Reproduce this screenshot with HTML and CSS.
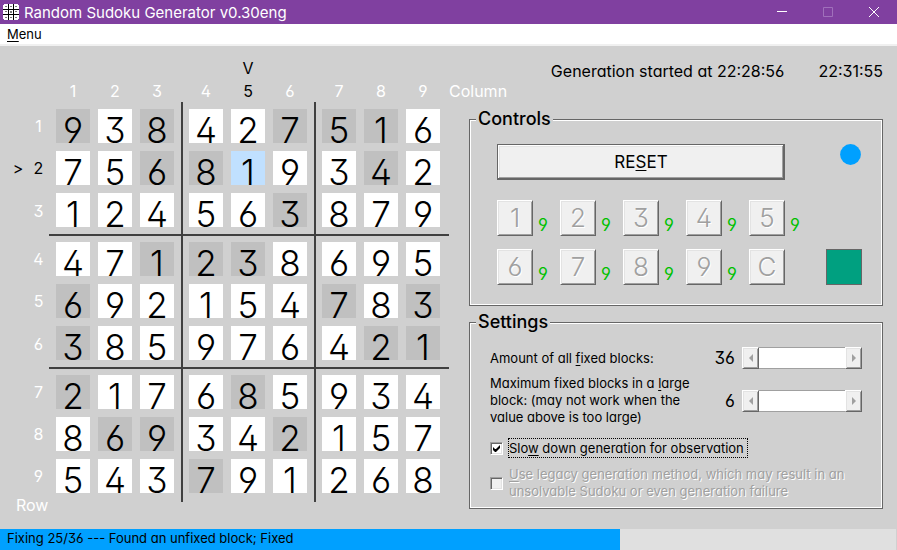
FILE: index.html
```html
<!DOCTYPE html>
<html lang="en">
<head>
<meta charset="utf-8">
<title>Random Sudoku Generator v0.30eng</title>
<link rel="stylesheet" href="styles.css">
</head>
<body>
<header class="titlebar">
  <svg class="app-icon" width="16" height="16" viewBox="0 0 16 16" shape-rendering="crispEdges" aria-hidden="true">
    <path fill="#fff" d="M1 0h14v1h1v14h-1v1H1v-1H0V1h1z"/>
    <path fill="#000" d="M5 0h1v16H5zM10 0h1v16h-1zM0 5h16v1H0zM0 10h16v1H0z"/>
    <path fill="#777" d="M2 2h2v1H2zM7 2h2v1H7zM12 2h2v1h-2zM2 7h2v1H2zM7 7h2v2H7zM12 7h2v1h-2zM2 13h2v1H2zM7 13h2v1H7zM12 13h2v1h-2z"/>
  </svg>
  <h1>Random Sudoku Generator v0.30eng</h1>
  <div class="window-buttons">
    <button type="button" aria-label="Minimize"><svg width="10" height="10" viewBox="0 0 10 10"><path d="M0 4.5h10"/></svg></button>
    <button type="button" aria-label="Maximize" disabled><svg width="10" height="10" viewBox="0 0 10 10"><path d="M.5.5h9v9h-9z"/></svg></button>
    <button type="button" aria-label="Close"><svg width="10" height="10" viewBox="0 0 10 10"><path d="M0 0l10 10M10 0L0 10"/></svg></button>
  </div>
</header>
<nav class="menubar"><button type="button"><u>M</u>enu</button></nav>

<main>
  <table class="board">
    <thead>
      <tr class="pointer"><td></td><td></td><th></th><th></th><th></th><th></th><th class="on">V</th><th></th><th></th><th></th><th></th></tr>
      <tr class="labels"><td></td><td></td><th>1</th><th>2</th><th>3</th><th>4</th><th class="on">5</th><th>6</th><th>7</th><th>8</th><th>9</th><td class="axis">Column</td></tr>
    </thead>
    <tbody>
      <tr><th></th><th>1</th><td><span class="fixed">9</span></td><td><span>3</span></td><td><span class="fixed">8</span></td><td><span>4</span></td><td><span>2</span></td><td><span class="fixed">7</span></td><td><span class="fixed">5</span></td><td><span class="fixed">1</span></td><td><span>6</span></td></tr>
      <tr><th class="on">&gt;</th><th class="on">2</th><td><span>7</span></td><td><span>5</span></td><td><span class="fixed">6</span></td><td><span class="fixed">8</span></td><td><span class="current">1</span></td><td><span>9</span></td><td><span>3</span></td><td><span class="fixed">4</span></td><td><span>2</span></td></tr>
      <tr><th></th><th>3</th><td><span>1</span></td><td><span>2</span></td><td><span>4</span></td><td><span>5</span></td><td><span>6</span></td><td><span class="fixed">3</span></td><td><span>8</span></td><td><span>7</span></td><td><span>9</span></td></tr>
      <tr><th></th><th>4</th><td><span>4</span></td><td><span>7</span></td><td><span class="fixed">1</span></td><td><span class="fixed">2</span></td><td><span class="fixed">3</span></td><td><span>8</span></td><td><span>6</span></td><td><span>9</span></td><td><span>5</span></td></tr>
      <tr><th></th><th>5</th><td><span class="fixed">6</span></td><td><span>9</span></td><td><span>2</span></td><td><span>1</span></td><td><span>5</span></td><td><span>4</span></td><td><span class="fixed">7</span></td><td><span>8</span></td><td><span class="fixed">3</span></td></tr>
      <tr><th></th><th>6</th><td><span class="fixed">3</span></td><td><span>8</span></td><td><span>5</span></td><td><span>9</span></td><td><span>7</span></td><td><span>6</span></td><td><span>4</span></td><td><span class="fixed">2</span></td><td><span class="fixed">1</span></td></tr>
      <tr><th></th><th>7</th><td><span class="fixed">2</span></td><td><span>1</span></td><td><span>7</span></td><td><span>6</span></td><td><span class="fixed">8</span></td><td><span>5</span></td><td><span>9</span></td><td><span>3</span></td><td><span>4</span></td></tr>
      <tr><th></th><th>8</th><td><span>8</span></td><td><span class="fixed">6</span></td><td><span class="fixed">9</span></td><td><span>3</span></td><td><span>4</span></td><td><span class="fixed">2</span></td><td><span>1</span></td><td><span>5</span></td><td><span>7</span></td></tr>
      <tr><th></th><th>9</th><td><span>5</span></td><td><span>4</span></td><td><span>3</span></td><td><span class="fixed">7</span></td><td><span>9</span></td><td><span>1</span></td><td><span>2</span></td><td><span>6</span></td><td><span>8</span></td></tr>
    </tbody>
  </table>
  <div class="row-axis">Row</div>

  <div class="side">
    <div class="times"><span>Generation started at 22:28:56</span><time>22:31:55</time></div>

    <fieldset class="controls">
      <legend>Controls</legend>
      <div class="top-line">
        <button type="button" class="bevel reset">RE<u>S</u>ET</button>
        <svg class="lamp" width="22" height="22" viewBox="0 0 22 22" aria-hidden="true"><circle cx="10.5" cy="10.5" r="10.4" fill="#00a0ff"/></svg>
      </div>
      <div class="keys">
        <div class="pad">
          <div class="key"><button type="button" class="bevel" disabled>1</button><span>9</span></div>
          <div class="key"><button type="button" class="bevel" disabled>2</button><span>9</span></div>
          <div class="key"><button type="button" class="bevel" disabled>3</button><span>9</span></div>
          <div class="key"><button type="button" class="bevel" disabled>4</button><span>9</span></div>
          <div class="key"><button type="button" class="bevel" disabled>5</button><span>9</span></div>
          <div class="key"><button type="button" class="bevel" disabled>6</button><span>9</span></div>
          <div class="key"><button type="button" class="bevel" disabled>7</button><span>9</span></div>
          <div class="key"><button type="button" class="bevel" disabled>8</button><span>9</span></div>
          <div class="key"><button type="button" class="bevel" disabled>9</button><span>9</span></div>
          <div class="key"><button type="button" class="bevel" disabled>C</button></div>
        </div>
        <div class="swatch"></div>
      </div>
    </fieldset>

    <fieldset class="settings">
      <legend>Settings</legend>
      <div class="setting">
        <label for="total">Amount of all <u>f</u>ixed blocks:</label>
        <output for="total">36</output>
        <div class="scroll">
          <button type="button" class="bevel" aria-label="Decrease" disabled><svg width="4" height="8" viewBox="0 0 4 8"><path d="M4 0v8L0 4z"/></svg></button>
          <input type="range" id="total" min="0" max="81" value="36" disabled>
          <button type="button" class="bevel" aria-label="Increase" disabled><svg width="4" height="8" viewBox="0 0 4 8"><path d="M0 0v8l4-4z"/></svg></button>
        </div>
      </div>
      <div class="setting">
        <label for="block">Maximum fixed blocks in a <u>l</u>arge block: (may not work when the value above is too large)</label>
        <output for="block">6</output>
        <div class="scroll">
          <button type="button" class="bevel" aria-label="Decrease" disabled><svg width="4" height="8" viewBox="0 0 4 8"><path d="M4 0v8L0 4z"/></svg></button>
          <input type="range" id="block" min="0" max="9" value="6" disabled>
          <button type="button" class="bevel" aria-label="Increase" disabled><svg width="4" height="8" viewBox="0 0 4 8"><path d="M0 0v8l4-4z"/></svg></button>
        </div>
      </div>
      <div class="check">
        <input type="checkbox" id="slow" checked>
        <label for="slow" class="focused">Slo<u>w</u> down generation for observation</label>
      </div>
      <div class="check off">
        <input type="checkbox" id="legacy" disabled>
        <label for="legacy"><u>U</u>se legacy generation method, which may result in an unsolvable Sudoku or even generation failure</label>
      </div>
    </fieldset>
  </div>
</main>

<footer class="status" role="progressbar" aria-valuemin="0" aria-valuemax="36" aria-valuenow="25" aria-label="Generation progress">
  <span>Fixing 25/36 --- Found an unfixed block; Fixed</span>
</footer>
</body>
</html>
```
FILE: styles.css
```css
* { box-sizing: border-box; }

body {
  margin: 0;
  min-height: 100vh;
  display: flex;
  flex-direction: column;
  background: #d0d0d0;
  color: #000;
  font: 13px/17px Inter, "Liberation Sans", sans-serif;
  font-feature-settings: "cv11", "ss01", "cv09";
}

button, input { font: inherit; font-feature-settings: inherit; color: inherit; margin: 0; }
button { padding: 0; border: 0; background: none; }
u { text-underline-offset: 2px; text-decoration-thickness: 1px; text-decoration-skip-ink: none; }

/* Window frame */
.titlebar {
  display: flex;
  align-items: center;
  height: 24px;
  padding-left: 3px;
  background: #8040a0;
  color: #fff;
}
.titlebar h1 {
  flex: 1;
  margin: 0 0 0 5px;
  font: 400 15px/23px Inter, sans-serif;
  font-feature-settings: normal;
}
.window-buttons { display: flex; }
.window-buttons button {
  width: 46px;
  height: 22px;
  display: grid;
  place-items: center;
}
.window-buttons svg { fill: none; stroke: #fff; }
.window-buttons button:disabled svg { stroke: #a070bb; }
.menubar {
  height: 22px;
  padding-left: 7px;
  background: #fff;
  border-bottom: 2px solid #f0f0f0;
}
.menubar button { height: 20px; font-size: 13px; font-feature-settings: normal; }

main {
  flex: 1;
  display: grid;
  grid-template-columns: 469px 1fr;
  grid-template-rows: auto 1fr;
  padding: 10px 14px 0 0;
}

/* Board */
.board {
  justify-self: start;
  margin-left: 8px;
  border-spacing: 0;
  color: #fff;
  font-size: 16px;
}
.board th { padding: 0; font-weight: 400; }
.board .on { color: #000; }
.board td { padding: 0; }
.pointer { height: 22px; }
.labels { height: 24px; }
.board tr > :nth-child(1) { width: 20px; }
.board tr > :nth-child(2) { width: 21px; }
.board tr > :nth-child(n+3):nth-child(-n+11) { padding: 0 4px; }
.board tr > :nth-child(3) { padding-left: 7px !important; }
.board tr > :nth-child(5), .board tr > :nth-child(8) {
  padding-right: 7px !important;
  border-right: 2px solid transparent;
}
.board tr > :nth-child(6), .board tr > :nth-child(9) { padding-left: 6px !important; }
.board tr > :nth-child(11) { padding-right: 9px !important; }
.board thead tr > * { padding-top: 2px !important; }
.board tbody td:nth-child(5), .board tbody td:nth-child(8) { border-right-color: #404040; }
.board tbody tr > * { padding-top: 4px !important; padding-bottom: 4px !important; }
.board tbody tr:nth-child(1) > * { padding-top: 7px !important; }
.board tbody tr:nth-child(3n) > * { padding-bottom: 7px !important; }
.board tbody tr:nth-child(3n+4) > * { padding-top: 6px !important; }
.board tbody tr:nth-child(9) > * { padding-bottom: 9px !important; }
.board tbody tr:nth-child(3) td, .board tbody tr:nth-child(6) td { border-bottom: 2px solid #404040; }
.board td span {
  display: block;
  width: 34px;
  height: 34px;
  background: #fff;
  color: #000;
  font-size: 35px;
  font-weight: 300;
  line-height: 42px;
  text-align: center;
}
.board td .fixed { background: #c0c0c0; }
.board td .current { background: #c0e0ff; }
.board .axis { width: 20px; max-width: 20px; }
.row-axis { grid-row: 2; margin-left: 16px; color: #fff; font-size: 16px; line-height: 6px; }

/* Right side */
.side { grid-column: 2; grid-row: 1 / 3; }
.times {
  display: flex;
  justify-content: flex-end;
  gap: 34px;
  padding-top: 4px;
  font-size: 16px;
  line-height: 22px;
}
fieldset {
  margin: 0;
  min-width: 0;
  border: 1px solid #666;
  box-shadow: inset 0 0 0 1px #fff;
}
legend {
  padding: 0 2px;
  background: #d0d0d0;
  font-size: 18px;
  font-weight: 500;
  line-height: 20px;
}
.controls { margin-top: 27px; padding: 15px 20px 20px 27px; }
.controls legend { margin-left: -21px; }
.top-line, .keys { display: flex; justify-content: space-between; }
.keys { align-items: flex-end; margin-top: 20px; }
.bevel {
  background: #f0f0f0;
  border: 1px solid;
  border-color: #fff #666 #666 #fff;
  box-shadow: inset 1px 1px #e3e3e3, inset -1px -1px #a0a0a0;
}
.reset {
  width: 288px;
  height: 36px;
  border-color: #666;
  box-shadow: inset -1px -1px #666, inset 1px 1px #fff, inset -2px -2px #a0a0a0, inset 2px 2px #e3e3e3;
  font-size: 17px;
}
.pad { display: grid; grid-template-columns: repeat(5, 63px); gap: 13px 0; }
.key { display: flex; align-items: flex-end; gap: 5px; }
.key button {
  width: 36px;
  height: 36px;
  color: #a0a0a0;
  font-size: 26px;
  font-weight: 300;
  line-height: 32px;
  text-shadow: 1px 1px #fff;
}
.key span { color: #00c000; font-size: 17px; line-height: 22px; }
.swatch { width: 36px; height: 36px; background: #00a080; border: 1px solid #666; }

.settings { margin-top: 6px; padding: 15px 20px 6px; }
.settings legend { margin-left: -14px; }
.setting {
  display: grid;
  grid-template-columns: 1fr auto 120px;
  column-gap: 7px;
  align-items: center;
}
.setting label { max-width: 210px; }
.setting + .setting { margin-top: 6px; }
.setting output { font-size: 17px; line-height: 22px; }
.scroll { display: flex; height: 22px; }
.scroll button { width: 17px; display: grid; place-items: center; }
.scroll path { fill: #a0a0a0; }
.scroll input {
  appearance: none;
  flex: 1;
  min-width: 0;
  background: #fff;
  border: solid #a0a0a0;
  border-width: 1px 0;
}
.scroll input::-webkit-slider-thumb { appearance: none; width: 0; height: 0; }
.check { display: flex; align-items: center; gap: 5px; margin-top: 12px; }
.check input {
  appearance: none;
  flex: none;
  width: 13px;
  height: 13px;
  background: #fff;
  border: 1px solid;
  border-color: #a0a0a0 #fff #fff #a0a0a0;
  box-shadow: inset 1px 1px #666, inset -1px -1px #e3e3e3;
}
.check input:checked {
  background: #fff url("data:image/svg+xml,%3Csvg xmlns='http://www.w3.org/2000/svg' width='7' height='7'%3E%3Cpath d='M0 2v3l2 2h1l4-4V0L3 4H2z'/%3E%3C/svg%3E") center no-repeat;
}
.check label { padding: 1px; border: 1px solid transparent; }
.check .focused { padding: 1px 3px 1px 0; border: 1px dotted #000; line-height: 16px; }
.check.off { margin-top: 6px; color: #a0a0a0; text-shadow: 1px 1px #fff; }
.check.off label { padding-left: 0; }
.check.off input { background: #f0f0f0; }

/* Progress */
.status {
  height: 21px;
  padding-left: 7px;
  margin-right: 1px;
  background: linear-gradient(90deg, #00a0ff 69.2%, #e0e0e0 69.2%);
  line-height: 19px;
}
```
